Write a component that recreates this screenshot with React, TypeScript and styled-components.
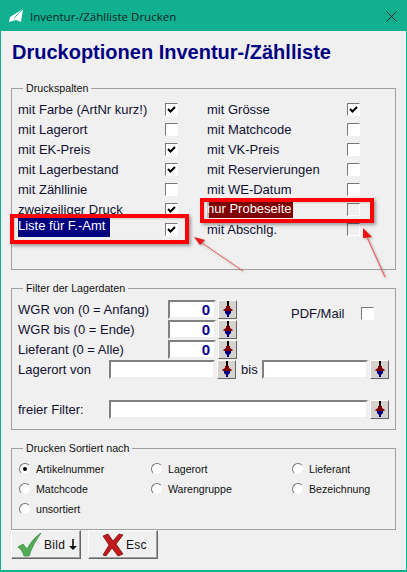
import React from "react";
import styled, { createGlobalStyle } from "styled-components";

const GlobalStyle = createGlobalStyle`
  html, body {
    margin: 0;
    padding: 0;
    background: #f0f0f0;
  }
  * {
    box-sizing: border-box;
  }
`;

const Window = styled.div`
  position: relative;
  display: flex;
  flex-direction: column;
  width: 407px;
  height: 572px;
  background: #f0f0f0;
  border: 1px solid #10b090;
  border-bottom-width: 2px;
  font-family: "Liberation Sans", Arial, sans-serif;
  color: #000;
  overflow: hidden;
`;

const TitleBar = styled.div`
  display: flex;
  align-items: center;
  flex: 0 0 31px;
  margin-top: -1px;
  padding: 1px 9px 0 8px;
  background: #10b090;
`;

const TitleText = styled.span`
  flex: 1;
  margin-left: 7px;
  font-family: "Open Sans", sans-serif;
  font-size: 11.5px;
  color: #07231d;
`;

const Body = styled.div`
  display: flex;
  flex-direction: column;
  padding: 0 10px;
`;

const Heading = styled.h1`
  margin: 9px 0 0 1px;
  height: 42px;
  font-size: 20px;
  line-height: 25px;
  font-weight: bold;
  color: #000080;
`;

const Group = styled.fieldset<{ $height: number; $gap?: number }>`
  margin: ${(p) => p.$gap ?? 0}px 0 0;
  padding: 0 6px;
  height: ${(p) => p.$height}px;
  width: 385px;
  min-width: 0;
  border: 1px solid #a0a0a0;
`;

const Legend = styled.legend`
  margin-left: 5px;
  padding: 0 3px;
  font-family: "Liberation Sans", Arial, sans-serif;
  font-size: 10.7px;
  line-height: 13px;
  color: #111;
`;

const Columns = styled.div`
  display: grid;
  grid-template-columns: 189px 1fr;
  margin-top: 4px;
`;

const Row = styled.div`
  position: relative;
  display: flex;
  align-items: center;
  height: 20px;
`;

const CheckLabel = styled.span<{ $width: number }>`
  display: flex;
  align-items: center;
  width: ${(p) => p.$width}px;
  font-size: 13px;
  color: #101030;
`;

const AccountMark = styled.span`
  width: 92px;
  height: 19px;
  margin-bottom: 4px;
  background: #000080;
  color: #fff;
  line-height: 15px;
`;

const TestMark = styled.span`
  width: 86px;
  height: 16px;
  margin-top: 2px;
  background: #800000;
  box-shadow: inset 2px 0 0 #b9b9b9;
  color: #fff;
  line-height: 14px;
`;

const Box = styled.span<{ $off?: boolean }>`
  display: inline-flex;
  align-items: center;
  justify-content: center;
  width: 13px;
  height: 13px;
  background: ${(p) => (p.$off ? "#f0f0f0" : "#fff")};
  border: 1px solid;
  border-color: #777 #fff #fff #777;
`;

const FilterRows = styled.div`
  margin-top: 4px;
`;

const FilterRow = styled.div<{ $gap?: number }>`
  display: flex;
  align-items: center;
  height: 20px;
  margin-top: ${(p) => p.$gap ?? 0}px;
`;

const FilterLabel = styled.span<{ $width: number }>`
  flex: 0 0 ${(p) => p.$width}px;
  font-size: 13px;
  color: #101030;
`;

const NumberInput = styled.div`
  width: 48px;
  height: 19px;
  padding-right: 4px;
  background: #fff;
  border: 2px solid;
  border-color: #808080 #eee #eee #808080;
  color: #000090;
  font-size: 15px;
  font-weight: bold;
  line-height: 16px;
  text-align: right;
`;

const TextInput = styled.div<{ $width: number }>`
  width: ${(p) => p.$width}px;
  height: 19px;
  background: #fff;
  border: 2px solid;
  border-color: #808080 #eee #eee #808080;
`;

const PickButton = styled.div`
  display: flex;
  align-items: center;
  justify-content: center;
  width: 19px;
  height: 19px;
  margin-left: 2px;
  background: #d6d3ce;
  border: 1px solid;
  border-color: #fff #666 #666 #fff;
`;

const PdfOption = styled.div`
  display: flex;
  align-items: center;
  margin: 8px 0 0 54px;
`;

const PdfLabel = styled.span`
  width: 70px;
  font-size: 13px;
  color: #101030;
`;

const BisLabel = styled.span`
  width: 26px;
  padding-left: 5px;
  font-size: 13px;
  color: #101030;
`;

const SortGrid = styled.div`
  display: grid;
  grid-template-columns: 132px 141px 1fr;
  grid-auto-rows: 20px;
  margin-top: 4px;
`;

const RadioItem = styled.div`
  display: flex;
  align-items: center;
  font-size: 10.6px;
  color: #111;
`;

const RadioDot = styled.span<{ $on?: boolean }>`
  display: inline-flex;
  align-items: center;
  justify-content: center;
  width: 12px;
  height: 12px;
  margin-left: 1px;
  margin-right: 5px;
  border-radius: 50%;
  background: #fff;
  border: 1px solid;
  border-color: #777 #eee #eee #777;

  &::after {
    content: "";
    display: ${(p) => (p.$on ? "block" : "none")};
    width: 4px;
    height: 4px;
    border-radius: 50%;
    background: #000;
  }
`;

const ButtonBar = styled.div`
  display: flex;
  gap: 7px;
  margin-top: 0;
`;

const ActionButton = styled.div<{ $inset: number }>`
  display: flex;
  align-items: center;
  width: 70px;
  height: 29px;
  padding-left: ${(p) => p.$inset}px;
  background: #f0f0f0;
  border: 1px solid;
  border-color: #fff #666 #666 #fff;
  box-shadow: inset -1px -1px 0 #a0a0a0;
  font-size: 12px;
  letter-spacing: 0.3px;
  color: #111;
`;

const ButtonText = styled.span`
  margin-left: 2px;
`;

const ArrowSlot = styled.span`
  display: flex;
  margin-left: 4px;
`;

const Highlight = styled.div<{ $left: number; $top: number; $width: number; $height: number }>`
  position: absolute;
  left: ${(p) => p.$left}px;
  top: ${(p) => p.$top}px;
  width: ${(p) => p.$width}px;
  height: ${(p) => p.$height}px;
  border: 4px solid #f00;
  box-shadow: 2px 2px 3px rgba(0, 0, 0, 0.35), inset 1px 1px 2px rgba(0, 0, 0, 0.15);
`;

const Arrows = styled.svg`
  position: absolute;
  left: -1px;
  top: -1px;
  pointer-events: none;
  filter: drop-shadow(1px 1px 1px rgba(0, 0, 0, 0.3));
`;

const Check = () => (
  <svg width="11" height="11" viewBox="0 0 11 11">
    <path d="M2 5l2.5 2.5L9 3" fill="none" stroke="#000" strokeWidth="2" />
  </svg>
);

const CheckBox = ({ on, off }: { on?: boolean; off?: boolean }) => (
  <Box $off={off}>{on && <Check />}</Box>
);

const DownPin = () => (
  <svg width="10" height="16" viewBox="0 0 10 16">
    <rect x="4" y="0" width="2" height="6" fill="#000" />
    <path d="M3 5h4v2l3 2-1 1H1L0 9l3-2z" fill="#800000" />
    <path d="M2 10h6v2l-2 2v2H4v-2L2 12z" fill="#000080" />
  </svg>
);

const CheckIcon = () => (
  <svg width="25" height="25" viewBox="0 0 25 25">
    <path
      d="M1 15l5-3 4 5C13 11 18 5 24 1c-5 7-9 14-12 23H7C6 20 4 17 1 15z"
      fill="#52ac52"
      stroke="#3d8f45"
      strokeWidth="0.8"
    />
  </svg>
);

const CrossIcon = () => (
  <svg width="22" height="24" viewBox="0 0 22 24">
    <path
      d="M1 3l5-2 5 7 6-7 4 1-7 9 7 10-5 2-6-8-6 8-3-1 6-10z"
      fill="#c21a1a"
      stroke="#7a1212"
      strokeWidth="0.8"
    />
  </svg>
);

const PlaneIcon = () => (
  <svg width="14" height="14" viewBox="0 0 14 14">
    <path d="M14 0L1 8 0 13l7-2 5 2z" fill="#fff" />
    <path d="M14 0L5 9" stroke="#10b090" strokeWidth="0.8" />
  </svg>
);

const CloseIcon = () => (
  <svg width="11" height="11" viewBox="0 0 11 11">
    <path d="M0.5 0.5l10 10M10.5 0.5l-10 10" stroke="#07231d" strokeWidth="1" />
  </svg>
);

const DownArrow = () => (
  <svg width="8" height="11" viewBox="0 0 8 11">
    <path d="M3.2 0h1.6v7H8l-4 4-4-4h3.2z" fill="#111" />
  </svg>
);

interface ColumnItem {
  label: string;
  on?: boolean;
  off?: boolean;
  mark?: "account" | "test";
}

const leftColumn: ColumnItem[] = [
  { label: "mit Farbe (ArtNr kurz!)", on: true },
  { label: "mit Lagerort" },
  { label: "mit EK-Preis", on: true },
  { label: "mit Lagerbestand", on: true },
  { label: "mit Zähllinie" },
  { label: "zweizeiliger Druck", on: true },
  { label: "Liste für F.-Amt", on: true, mark: "account" },
];

const rightColumn: ColumnItem[] = [
  { label: "mit Grösse", on: true },
  { label: "mit Matchcode" },
  { label: "mit VK-Preis" },
  { label: "mit Reservierungen" },
  { label: "mit WE-Datum" },
  { label: "nur Probeseite", off: true, mark: "test" },
  { label: "mit Abschlg.", off: true },
];

const sortOptions = [
  "Artikelnummer",
  "Lagerort",
  "Lieferant",
  "Matchcode",
  "Warengruppe",
  "Bezeichnung",
  "unsortiert",
];

const renderLabel = (item: ColumnItem) => {
  if (item.mark === "account") {
    return <AccountMark>{item.label}</AccountMark>;
  }
  if (item.mark === "test") {
    return <TestMark>{item.label}</TestMark>;
  }
  return item.label;
};

const renderColumn = (items: ColumnItem[], width: number) => (
  <div>
    {items.map((item) => (
      <Row key={item.label}>
        <CheckLabel $width={width}>{renderLabel(item)}</CheckLabel>
        <CheckBox on={item.on} off={item.off} />
      </Row>
    ))}
  </div>
);

const App: React.FC = () => (
  <Window>
    <GlobalStyle />
    <TitleBar>
      <PlaneIcon />
      <TitleText>Inventur-/Zählliste Drucken</TitleText>
      <CloseIcon />
    </TitleBar>
    <Body>
      <Heading>Druckoptionen Inventur-/Zählliste</Heading>
      <Group $height={188}>
        <Legend>Druckspalten</Legend>
        <Columns>
          {renderColumn(leftColumn, 147)}
          {renderColumn(rightColumn, 140)}
        </Columns>
      </Group>
      <Group $height={148} $gap={12}>
        <Legend>Filter der Lagerdaten</Legend>
        <FilterRows>
          <FilterRow>
            <FilterLabel $width={150}>WGR von (0 = Anfang)</FilterLabel>
            <NumberInput>0</NumberInput>
            <PickButton>
              <DownPin />
            </PickButton>
            <PdfOption>
              <PdfLabel>PDF/Mail</PdfLabel>
              <CheckBox />
            </PdfOption>
          </FilterRow>
          <FilterRow>
            <FilterLabel $width={150}>WGR bis (0 = Ende)</FilterLabel>
            <NumberInput>0</NumberInput>
            <PickButton>
              <DownPin />
            </PickButton>
          </FilterRow>
          <FilterRow>
            <FilterLabel $width={150}>Lieferant (0 = Alle)</FilterLabel>
            <NumberInput>0</NumberInput>
            <PickButton>
              <DownPin />
            </PickButton>
          </FilterRow>
          <FilterRow>
            <FilterLabel $width={91}>Lagerort von</FilterLabel>
            <TextInput $width={107} />
            <PickButton>
              <DownPin />
            </PickButton>
            <BisLabel>bis</BisLabel>
            <TextInput $width={107} />
            <PickButton>
              <DownPin />
            </PickButton>
          </FilterRow>
          <FilterRow $gap={20}>
            <FilterLabel $width={91}>freier Filter:</FilterLabel>
            <TextInput $width={261} />
            <PickButton>
              <DownPin />
            </PickButton>
          </FilterRow>
        </FilterRows>
      </Group>
      <Group $height={88} $gap={12}>
        <Legend>Drucken Sortiert nach</Legend>
        <SortGrid>
          {sortOptions.map((option, index) => (
            <RadioItem key={option}>
              <RadioDot $on={index === 0} />
              {option}
            </RadioItem>
          ))}
        </SortGrid>
      </Group>
      <ButtonBar>
        <ActionButton $inset={5}>
          <CheckIcon />
          <ButtonText>Bild</ButtonText>
          <ArrowSlot>
            <DownArrow />
          </ArrowSlot>
        </ActionButton>
        <ActionButton $inset={13}>
          <CrossIcon />
          <ButtonText>Esc</ButtonText>
        </ActionButton>
      </ButtonBar>
    </Body>
    <Highlight $left={9} $top={213} $width={179} $height={30} />
    <Highlight $left={199} $top={197} $width={174} $height={25} />
    <Arrows width="407" height="572" viewBox="0 0 407 572">
      <path d="M202 243L243 271" stroke="#f06060" strokeWidth="1" />
      <path d="M194 237l11 3-5 5z" fill="#e81818" />
      <path d="M367 237L385 277" stroke="#f06060" strokeWidth="1.2" />
      <path d="M363 228l9 9-9 1z" fill="#f01010" />
    </Arrows>
  </Window>
);

App.displayName = "App";

export default App;
